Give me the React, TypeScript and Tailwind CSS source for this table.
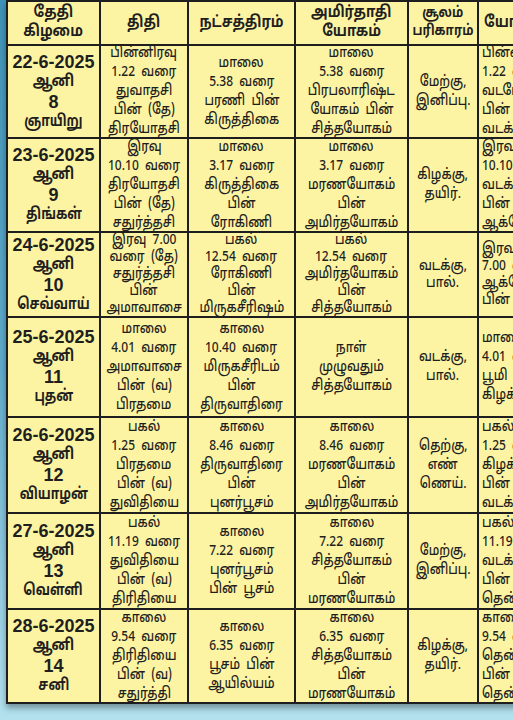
import React from 'react';

type Row = {
  date: string;
  day: string;
  weekday: string;
  thithi: string[];
  star: string[];
  amirtha: string[];
  soolam: string[];
  yogam: string[];
};

const rows: Row[] = [
  {
    date: '22-6-2025',
    day: '8',
    weekday: 'ஞாயிறு',
    thithi: ['பின்னிரவு', '1.22  வரை', 'துவாதசி', 'பின்  (தே)', 'திரயோதசி'],
    star: ['மாலை', '5.38  வரை', 'பரணி  பின்', 'கிருத்திகை'],
    amirtha: ['மாலை', '5.38  வரை', 'பிரபலாரிஷ்ட', 'யோகம்  பின்', 'சித்தயோகம்'],
    soolam: ['மேற்கு,', 'இனிப்பு.'],
    yogam: ['பின்னிரவு', '1.22  வரை', 'வடமேற்கு', 'பின்', 'வடக்கு'],
  },
  {
    date: '23-6-2025',
    day: '9',
    weekday: 'திங்கள்',
    thithi: ['இரவு', '10.10  வரை', 'திரயோதசி', 'பின்  (தே)', 'சதுர்த்தசி'],
    star: ['மாலை', '3.17  வரை', 'கிருத்திகை', 'பின்', 'ரோகிணி'],
    amirtha: ['மாலை', '3.17  வரை', 'மரணயோகம்', 'பின்', 'அமிர்தயோகம்'],
    soolam: ['கிழக்கு,', 'தயிர்.'],
    yogam: ['இரவு', '10.10  வரை', 'வடக்கு', 'பின்', 'ஆக்னேயம்'],
  },
  {
    date: '24-6-2025',
    day: '10',
    weekday: 'செவ்வாய்',
    thithi: ['இரவு  7.00', 'வரை  (தே)', 'சதுர்த்தசி', 'பின்', 'அமாவாசை'],
    star: ['பகல்', '12.54  வரை', 'ரோகிணி', 'பின்', 'மிருகசீரிஷம்'],
    amirtha: ['பகல்', '12.54  வரை', 'அமிர்தயோகம்', 'பின்', 'சித்தயோகம்'],
    soolam: ['வடக்கு,', 'பால்.'],
    yogam: ['இரவு', '7.00  வரை', 'ஆக்னேயம்', 'பின்'],
  },
  {
    date: '25-6-2025',
    day: '11',
    weekday: 'புதன்',
    thithi: ['மாலை', '4.01  வரை', 'அமாவாசை', 'பின்  (வ)', 'பிரதமை'],
    star: ['காலை', '10.40  வரை', 'மிருகசீரிடம்', 'பின்', 'திருவாதிரை'],
    amirtha: ['நாள்', 'முழுவதும்', 'சித்தயோகம்'],
    soolam: ['வடக்கு,', 'பால்.'],
    yogam: ['மாலை', '4.01  வரை', 'பூமி  பின்', 'கிழக்கு'],
  },
  {
    date: '26-6-2025',
    day: '12',
    weekday: 'வியாழன்',
    thithi: ['பகல்', '1.25  வரை', 'பிரதமை', 'பின்  (வ)', 'துவிதியை'],
    star: ['காலை', '8.46  வரை', 'திருவாதிரை', 'பின்', 'புனர்பூசம்'],
    amirtha: ['காலை', '8.46  வரை', 'மரணயோகம்', 'பின்', 'அமிர்தயோகம்'],
    soolam: ['தெற்கு,', 'எண்', 'ணெய்.'],
    yogam: ['பகல்', '1.25  வரை', 'கிழக்கு', 'பின்', 'வடக்கு'],
  },
  {
    date: '27-6-2025',
    day: '13',
    weekday: 'வெள்ளி',
    thithi: ['பகல்', '11.19  வரை', 'துவிதியை', 'பின்  (வ)', 'திரிதியை'],
    star: ['காலை', '7.22  வரை', 'புனர்பூசம்', 'பின்  பூசம்'],
    amirtha: ['காலை', '7.22  வரை', 'சித்தயோகம்', 'பின்', 'மரணயோகம்'],
    soolam: ['மேற்கு,', 'இனிப்பு.'],
    yogam: ['பகல்', '11.19  வரை', 'வடக்கு', 'பின்', 'தென்கிழக்கு'],
  },
  {
    date: '28-6-2025',
    day: '14',
    weekday: 'சனி',
    thithi: ['காலை', '9.54  வரை', 'திரிதியை', 'பின்  (வ)', 'சதுர்த்தி'],
    star: ['காலை', '6.35  வரை', 'பூசம்  பின்', 'ஆயில்யம்'],
    amirtha: ['காலை', '6.35  வரை', 'சித்தயோகம்', 'பின்', 'மரணயோகம்'],
    soolam: ['கிழக்கு,', 'தயிர்.'],
    yogam: ['காலை', '9.54  வரை', 'தென்கிழக்கு', 'பின்', 'தென்மேற்கு'],
  },
];

// height and line spacing of each day row, taken from the printed table
const rowStyle = [
  'h-[93px] leading-[19px]',
  'h-[94px] leading-[19px]',
  'h-[85px] leading-[17px]',
  'h-[100px] leading-[19px]',
  'h-[96px] leading-[19px]',
  'h-[96px] leading-[19px]',
  'h-[94px] leading-[19px]',
];

const cols = 'grid grid-cols-[93px_88px_107px_113px_70px_101px]';
const cell = 'flex flex-col items-center justify-center border-r-2 border-b-2 border-[#1e1e1e] text-center overflow-hidden';
const tamil = { fontFamily: '"Noto Sans Tamil", "Latha", "Lohit Tamil", "Noto Sans", sans-serif' };
const latin = { fontFamily: '"Liberation Sans", Arial, sans-serif' };

function Lines({ lines, left = false }: { lines: string[]; left?: boolean }) {
  return (
    <>
      {lines.map((l, i) => (
        <div key={i} className={`whitespace-pre scale-x-[0.8] ${left ? 'origin-left' : ''}`}>
          {l}
        </div>
      ))}
    </>
  );
}

export default function App() {
  return (
    <div className="w-[513px] h-[720px] overflow-hidden bg-gradient-to-b from-[#3f93b7] via-[#5eaacb] to-[#b3e1ee] pl-[6px]">
      <div
        className="w-[572px] border-l-2 border-t-2 border-[#1e1e1e] bg-[#fdf4a3] text-[#1f1f1f] shadow-[0_4px_6px_rgba(0,0,0,0.35)]"
        style={tamil}
      >
        {/* header */}
        <div className={`${cols} h-[44px] font-bold text-[16px] leading-[19px]`}>
          <div className={cell}>
            <div className="scale-x-[0.85]">தேதி</div>
            <div className="scale-x-[0.85]">கிழமை</div>
          </div>
          <div className={cell}>
            <div className="scale-x-[0.85]">திதி</div>
          </div>
          <div className={cell}>
            <div className="scale-x-[0.85]">நட்சத்திரம்</div>
          </div>
          <div className={cell}>
            <div className="scale-x-[0.85]">அமிர்தாதி</div>
            <div className="scale-x-[0.85]">யோகம்</div>
          </div>
          <div className={`${cell} text-[15px] leading-[18px]`}>
            <div className="scale-x-[0.8]">சூலம்</div>
            <div className="scale-x-[0.8]">பரிகாரம்</div>
          </div>
          <div className={`${cell} items-start pl-[5px]`}>
            <div className="scale-x-[0.85] origin-left">யோகம்</div>
          </div>
        </div>

        {rows.map((r, i) => (
          <div key={r.date} className={`${cols} ${rowStyle[i]} text-[15px] font-medium`}>
            <div className={`${cell} font-bold text-[16px] leading-[20px]`}>
              <div className="text-[18px]" style={latin}>
                {r.date}
              </div>
              <div className="scale-x-[0.85]">ஆனி</div>
              <div className="text-[18px]" style={latin}>
                {r.day}
              </div>
              <div className="scale-x-[0.78]">{r.weekday}</div>
            </div>
            <div className={cell}>
              <Lines lines={r.thithi} />
            </div>
            <div className={cell}>
              <Lines lines={r.star} />
            </div>
            <div className={cell}>
              <Lines lines={r.amirtha} />
            </div>
            <div className={cell}>
              <Lines lines={r.soolam} />
            </div>
            <div className={`${cell} items-start pl-[3px]`}>
              <Lines lines={r.yogam} left />
            </div>
          </div>
        ))}
      </div>
    </div>
  );
}
